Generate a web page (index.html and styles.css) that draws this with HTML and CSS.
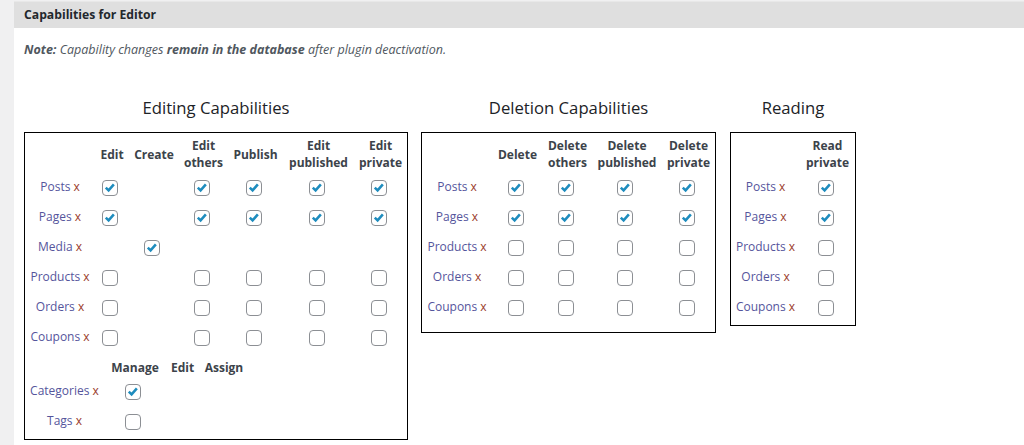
FILE: index.html
```html
<!DOCTYPE html>
<html>
<head>
<meta charset="utf-8">
<link rel="stylesheet" href="styles.css">
</head>
<body>
<div class="panel">
  <div class="panel-head">Capabilities for Editor</div>
  <div class="panel-body">
    <p class="note"><b>Note:</b> Capability changes <b>remain in the database</b> after plugin deactivation.</p>
    <div class="groups">
      <div class="group g-edit">
        <h3 class="title">Editing Capabilities</h3>
        <div class="box pb4">
          <table class="caps">
            <colgroup><col style="width:70px"><col style="width:34px"><col style="width:50px"><col style="width:49px"><col style="width:55px"><col style="width:71px"><col style="width:53px"></colgroup>
            <thead><tr><th></th><th>Edit</th><th>Create</th><th>Edit<br>others</th><th>Publish</th><th>Edit<br>published</th><th>Edit<br>private</th></tr></thead>
            <tbody>
              <tr><td class="lbl">Posts <span class="x">x</span></td><td><span class="cb on"><svg viewBox="0 0 16 16"><path d="M3.2 7.6 L6.4 10.8 L12.4 3.8"/></svg></span></td><td></td><td><span class="cb on"><svg viewBox="0 0 16 16"><path d="M3.2 7.6 L6.4 10.8 L12.4 3.8"/></svg></span></td><td><span class="cb on"><svg viewBox="0 0 16 16"><path d="M3.2 7.6 L6.4 10.8 L12.4 3.8"/></svg></span></td><td><span class="cb on"><svg viewBox="0 0 16 16"><path d="M3.2 7.6 L6.4 10.8 L12.4 3.8"/></svg></span></td><td><span class="cb on"><svg viewBox="0 0 16 16"><path d="M3.2 7.6 L6.4 10.8 L12.4 3.8"/></svg></span></td></tr>
              <tr><td class="lbl">Pages <span class="x">x</span></td><td><span class="cb on"><svg viewBox="0 0 16 16"><path d="M3.2 7.6 L6.4 10.8 L12.4 3.8"/></svg></span></td><td></td><td><span class="cb on"><svg viewBox="0 0 16 16"><path d="M3.2 7.6 L6.4 10.8 L12.4 3.8"/></svg></span></td><td><span class="cb on"><svg viewBox="0 0 16 16"><path d="M3.2 7.6 L6.4 10.8 L12.4 3.8"/></svg></span></td><td><span class="cb on"><svg viewBox="0 0 16 16"><path d="M3.2 7.6 L6.4 10.8 L12.4 3.8"/></svg></span></td><td><span class="cb on"><svg viewBox="0 0 16 16"><path d="M3.2 7.6 L6.4 10.8 L12.4 3.8"/></svg></span></td></tr>
              <tr><td class="lbl">Media <span class="x">x</span></td><td></td><td><span class="cb on"><svg viewBox="0 0 16 16"><path d="M3.2 7.6 L6.4 10.8 L12.4 3.8"/></svg></span></td><td></td><td></td><td></td><td></td></tr>
              <tr><td class="lbl">Products <span class="x">x</span></td><td><span class="cb"></span></td><td></td><td><span class="cb"></span></td><td><span class="cb"></span></td><td><span class="cb"></span></td><td><span class="cb"></span></td></tr>
              <tr><td class="lbl">Orders <span class="x">x</span></td><td><span class="cb"></span></td><td></td><td><span class="cb"></span></td><td><span class="cb"></span></td><td><span class="cb"></span></td><td><span class="cb"></span></td></tr>
              <tr><td class="lbl">Coupons <span class="x">x</span></td><td><span class="cb"></span></td><td></td><td><span class="cb"></span></td><td><span class="cb"></span></td><td><span class="cb"></span></td><td><span class="cb"></span></td></tr>
            </tbody>
          </table>
          <table class="caps tax">
            <colgroup><col style="width:79px"><col style="width:62px"><col style="width:33px"><col style="width:50px"></colgroup>
            <thead><tr><th></th><th>Manage</th><th>Edit</th><th>Assign</th></tr></thead>
            <tbody>
              <tr><td class="lbl">Categories <span class="x">x</span></td><td><span class="cb on"><svg viewBox="0 0 16 16"><path d="M3.2 7.6 L6.4 10.8 L12.4 3.8"/></svg></span></td><td></td><td></td></tr>
              <tr><td class="lbl">Tags <span class="x">x</span></td><td><span class="cb"></span></td><td></td><td></td></tr>
            </tbody>
          </table>
        </div>
      </div>
      <div class="group g-del">
        <h3 class="title">Deletion Capabilities</h3>
        <div class="box pb11">
          <table class="caps">
            <colgroup><col style="width:70px"><col style="width:51px"><col style="width:49px"><col style="width:70px"><col style="width:53px"></colgroup>
            <thead><tr><th></th><th>Delete</th><th>Delete<br>others</th><th>Delete<br>published</th><th>Delete<br>private</th></tr></thead>
            <tbody>
              <tr><td class="lbl">Posts <span class="x">x</span></td><td><span class="cb on"><svg viewBox="0 0 16 16"><path d="M3.2 7.6 L6.4 10.8 L12.4 3.8"/></svg></span></td><td><span class="cb on"><svg viewBox="0 0 16 16"><path d="M3.2 7.6 L6.4 10.8 L12.4 3.8"/></svg></span></td><td><span class="cb on"><svg viewBox="0 0 16 16"><path d="M3.2 7.6 L6.4 10.8 L12.4 3.8"/></svg></span></td><td><span class="cb on"><svg viewBox="0 0 16 16"><path d="M3.2 7.6 L6.4 10.8 L12.4 3.8"/></svg></span></td></tr>
              <tr><td class="lbl">Pages <span class="x">x</span></td><td><span class="cb on"><svg viewBox="0 0 16 16"><path d="M3.2 7.6 L6.4 10.8 L12.4 3.8"/></svg></span></td><td><span class="cb on"><svg viewBox="0 0 16 16"><path d="M3.2 7.6 L6.4 10.8 L12.4 3.8"/></svg></span></td><td><span class="cb on"><svg viewBox="0 0 16 16"><path d="M3.2 7.6 L6.4 10.8 L12.4 3.8"/></svg></span></td><td><span class="cb on"><svg viewBox="0 0 16 16"><path d="M3.2 7.6 L6.4 10.8 L12.4 3.8"/></svg></span></td></tr>
              <tr><td class="lbl">Products <span class="x">x</span></td><td><span class="cb"></span></td><td><span class="cb"></span></td><td><span class="cb"></span></td><td><span class="cb"></span></td></tr>
              <tr><td class="lbl">Orders <span class="x">x</span></td><td><span class="cb"></span></td><td><span class="cb"></span></td><td><span class="cb"></span></td><td><span class="cb"></span></td></tr>
              <tr><td class="lbl">Coupons <span class="x">x</span></td><td><span class="cb"></span></td><td><span class="cb"></span></td><td><span class="cb"></span></td><td><span class="cb"></span></td></tr>
            </tbody>
          </table>
        </div>
      </div>
      <div class="group g-read">
        <h3 class="title">Reading</h3>
        <div class="box pb4">
          <table class="caps">
            <colgroup><col style="width:69px"><col style="width:55px"></colgroup>
            <thead><tr><th></th><th>Read<br>private</th></tr></thead>
            <tbody>
              <tr><td class="lbl">Posts <span class="x">x</span></td><td><span class="cb on"><svg viewBox="0 0 16 16"><path d="M3.2 7.6 L6.4 10.8 L12.4 3.8"/></svg></span></td></tr>
              <tr><td class="lbl">Pages <span class="x">x</span></td><td><span class="cb on"><svg viewBox="0 0 16 16"><path d="M3.2 7.6 L6.4 10.8 L12.4 3.8"/></svg></span></td></tr>
              <tr><td class="lbl">Products <span class="x">x</span></td><td><span class="cb"></span></td></tr>
              <tr><td class="lbl">Orders <span class="x">x</span></td><td><span class="cb"></span></td></tr>
              <tr><td class="lbl">Coupons <span class="x">x</span></td><td><span class="cb"></span></td></tr>
            </tbody>
          </table>
        </div>
      </div>
    </div>
  </div>
</div>
</body>
</html>
```
FILE: styles.css
```css
html, body {
  margin: 0;
  padding: 0;
  background: #f0f0f1;
  font-family: "Open Sans", "Noto Sans", sans-serif;
  font-size: 12px;
  color: #3c434a;
}
.panel {
  margin: 1px 0 0 14px;
  background: #fff;
  min-height: 444px;
}
.panel-head {
  height: 27px;
  box-sizing: border-box;
  background: #dfdfdf;
  border-top: 1px solid #e8e8e8;
  padding: 0 10px;
  font-weight: 700;
  font-size: 12.2px;
  line-height: 26px;
  color: #23282d;
}
.panel-body {
  padding: 13px 0 0 10px;
}
.note {
  margin: 0;
  font-style: italic;
  font-size: 12.5px;
  line-height: 18px;
  color: #50575e;
}
.note b {
  font-weight: 700;
}
.groups {
  display: flex;
  align-items: flex-start;
  gap: 13px;
  margin-top: 37px;
}
.g-edit { width: 384px; }
.g-del { width: 295px; }
.g-read { width: 126px; margin-left: 1px; }
.title {
  margin: 0 0 12px;
  text-align: center;
  font-weight: 400;
  font-size: 16.7px;
  line-height: 24px;
  color: #1d2327;
}
.box {
  border: 1px solid #000;
}
.pb4 { padding-bottom: 4px; }
.pb11 { padding-bottom: 11px; }
.caps {
  border-collapse: collapse;
  table-layout: fixed;
}
.caps th {
  padding: 4px 0 0;
  font-weight: 700;
  font-size: 12px;
  line-height: 17px;
  color: #3c434a;
  text-align: center;
  vertical-align: middle;
  height: 34px;
  white-space: nowrap;
}
.caps td {
  padding: 0;
  height: 30px;
  text-align: center;
  vertical-align: middle;
  white-space: nowrap;
}
.caps td.lbl {
  font-size: 12px;
  color: #55559c;
}
.x {
  color: #9a3b2a;
}
.tax th {
  height: 14px;
  padding: 10px 0 0;
  line-height: 14px;
  vertical-align: top;
}
.cb {
  display: inline-block;
  box-sizing: border-box;
  width: 16px;
  height: 16px;
  margin-right: 4px;
  border: 1px solid #8c8f94;
  border-radius: 4px;
  background: #fff;
  vertical-align: middle;
  position: relative;
  top: 1px;
}
.cb svg {
  display: block;
  width: 14px;
  height: 14px;
}
.cb svg path {
  fill: none;
  stroke: #1e8cbe;
  stroke-width: 2.9;
}
```
